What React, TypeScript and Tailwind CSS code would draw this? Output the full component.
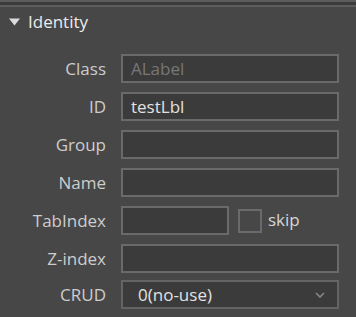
import React from "react";

const font = { fontFamily: '"Open Sans", "Noto Sans", sans-serif' };

const Field = ({ label, children, className = "" }: { label: string; children: React.ReactNode; className?: string }) => (
  <div className={`flex items-center ${className}`}>
    <label className="w-[106px] text-right text-[17px] text-[#cdcdcd] leading-none">{label}</label>
    <div className="ml-[15px] flex items-center">{children}</div>
  </div>
);

const TextBox = ({ value = "", placeholder = "", w = "w-[218px]" }: { value?: string; placeholder?: string; w?: string }) => (
  <div className={`${w} h-[29px] border-2 border-[#6a6a6a] bg-[#3b3b3b] flex items-center px-[8px] text-[17px] leading-none`}>
    {value ? <span className="text-[#e2e2e2]">{value}</span> : <span className="text-[#777777]">{placeholder}</span>}
  </div>
);

export default function App() {
  return (
    <div className="w-[356px] h-[317px] bg-[#474747] overflow-hidden" style={font}>
      <div className="h-[2px] bg-[#5c5c5c]" />
      <div className="h-[3px] bg-[#3b3b3b]" />
      <div className="h-[2px] bg-[#5e5e5e]" />
      <div className="h-[30px] flex items-center pl-[9px]">
        <svg width="11" height="8" viewBox="0 0 11 8" className="mr-[8px]">
          <polygon points="0,0.5 11,0.5 5.5,7.5" fill="#dcdcdc" />
        </svg>
        <span className="text-[17px] text-[#ececec] leading-none -mt-[1px]">Identity</span>
      </div>
      <div className="pt-[17px] flex flex-col gap-[9px]">
        <Field label="Class">
          <TextBox placeholder="ALabel" />
        </Field>
        <Field label="ID">
          <TextBox value="testLbl" />
        </Field>
        <Field label="Group">
          <TextBox />
        </Field>
        <Field label="Name">
          <TextBox />
        </Field>
        <Field label="TabIndex">
          <TextBox w="w-[108px]" />
          <div className="ml-[9px] w-[24px] h-[24px] border-2 border-[#6a6a6a] bg-[#474747]" />
          <span className="ml-[6px] text-[17px] text-[#d6d6d6] leading-none -mt-[2px]">skip</span>
        </Field>
        <Field label="Z-index">
          <TextBox />
        </Field>
        <Field label="CRUD" className="-mt-[2px]">
          <div className="w-[218px] h-[29px] border-2 border-[#646464] bg-[#3b3b3b] flex items-center justify-between pl-[15px] pr-[12px] text-[17px] leading-none">
            <span className="text-[#e2e2e2]">0(no-use)</span>
            <svg width="10" height="6" viewBox="0 0 10 6">
              <polyline points="1,1 5,5 9,1" fill="none" stroke="#858585" strokeWidth="1.6" />
            </svg>
          </div>
        </Field>
      </div>
    </div>
  );
}
